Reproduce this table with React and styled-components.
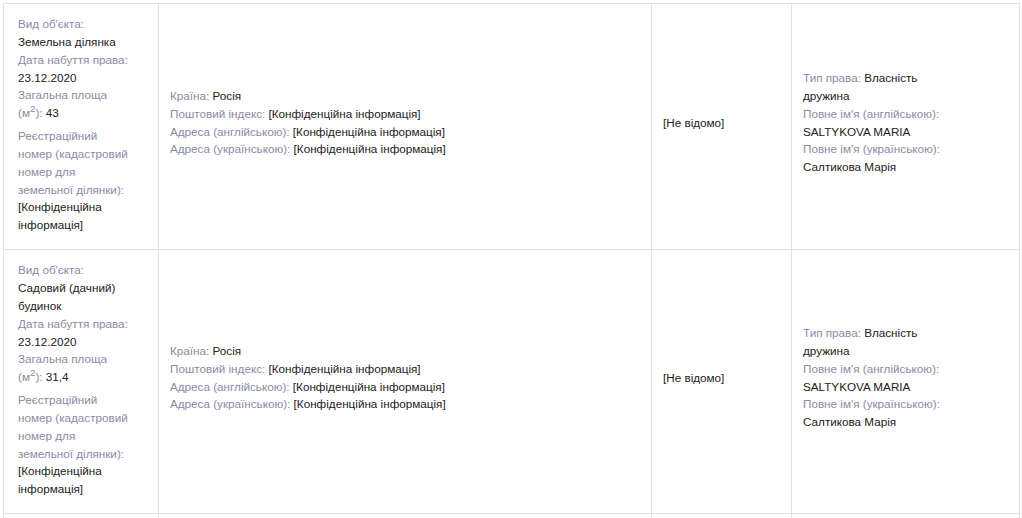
import React from 'react';
import styled, { createGlobalStyle } from 'styled-components';

const GlobalStyle = createGlobalStyle`
  html, body {
    margin: 0;
    padding: 0;
    background: #fff;
    overflow: hidden;
  }
  body {
    font-family: "Liberation Sans", Arial, sans-serif;
  }
`;

const Page = styled.div`
  padding: 3px 0 0 3px;
`;

const Table = styled.table`
  width: 1016px;
  table-layout: fixed;
  border-collapse: collapse;
  font-size: 11.7px;
  line-height: 17.85px;
  color: #222;
`;

const Cell = styled.td`
  border: 1px solid #e1e1e4;
  vertical-align: middle;
  padding: 6px 12px 14px 11px;

  ${(p) =>
    p.$first &&
    `
    padding: 11px 27px 15px 14px;
  `}

  ${(p) =>
    p.$owner &&
    `
    padding-right: 60px;
  `}
`;

const Item = styled.div`
  margin-bottom: ${(p) => (p.$gap ? '5px' : '0')};

  sup {
    line-height: 0;
  }
`;

const Label = styled.span`
  color: #8a8ba3;
`;

const Value = styled.span`
  color: #222;
  display: ${(p) => (p.$own ? 'block' : 'inline')};
`;

const rows = [
  { kind: 'Земельна ділянка', area: '43' },
  { kind: 'Садовий (дачний) будинок', area: '31,4' },
  { kind: 'Земельна ділянка', area: '43' },
];

const ObjectCell = ({ kind, area }) => (
  <Cell $first>
    <Item>
      <Label>Вид об'єкта:</Label>
      <Value $own>{kind}</Value>
    </Item>
    <Item>
      <Label>Дата набуття права:</Label>
      <Value $own>23.12.2020</Value>
    </Item>
    <Item $gap>
      <Label>
        Загальна площа (м<sup>2</sup>):
      </Label>{' '}
      <Value>{area}</Value>
    </Item>
    <Item>
      <Label>Реєстраційний номер (кадастровий номер для земельної ділянки):</Label>
      <Value $own>[Конфіденційна інформація]</Value>
    </Item>
  </Cell>
);

const AddressCell = () => (
  <Cell>
    <Item>
      <Label>Країна:</Label> <Value>Росія</Value>
    </Item>
    <Item>
      <Label>Поштовий індекс:</Label> <Value>[Конфіденційна інформація]</Value>
    </Item>
    <Item>
      <Label>Адреса (англійською):</Label> <Value>[Конфіденційна інформація]</Value>
    </Item>
    <Item>
      <Label>Адреса (українською):</Label> <Value>[Конфіденційна інформація]</Value>
    </Item>
  </Cell>
);

const OwnerCell = () => (
  <Cell $owner>
    <Item>
      <Label>Тип права:</Label> <Value>Власність дружина</Value>
    </Item>
    <Item>
      <Label>Повне ім'я (англійською):</Label> <Value>SALTYKOVA MARIA</Value>
    </Item>
    <Item>
      <Label>Повне ім'я (українською):</Label> <Value>Салтикова Марія</Value>
    </Item>
  </Cell>
);

export default function App() {
  return (
    <Page>
      <GlobalStyle />
      <Table>
        <colgroup>
          <col style={{ width: 155 }} />
          <col style={{ width: 493 }} />
          <col style={{ width: 140 }} />
          <col style={{ width: 228 }} />
        </colgroup>
        <tbody>
          {rows.map((r, i) => (
            <tr key={i}>
              <ObjectCell kind={r.kind} area={r.area} />
              <AddressCell />
              <Cell>[Не відомо]</Cell>
              <OwnerCell />
            </tr>
          ))}
        </tbody>
      </Table>
    </Page>
  );
}
